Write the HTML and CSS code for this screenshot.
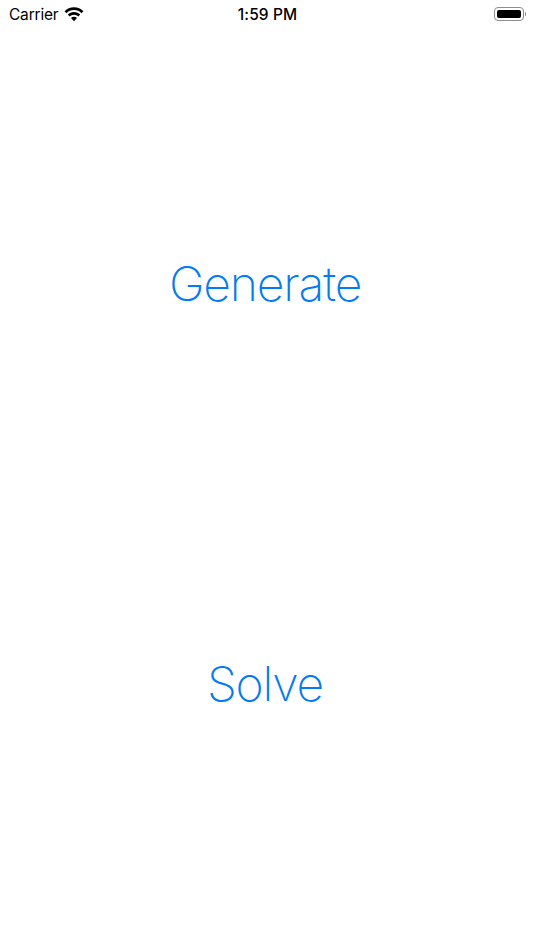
FILE: index.html
```html
<!DOCTYPE html>
<html lang="en">
<head>
    <meta charset="UTF-8">
    <meta name="viewport" content="width=device-width, initial-scale=1.0">
    <title>Sudoku</title>
    <link rel="stylesheet" href="styles.css">
</head>
<body>
    <div class="status-bar">
        <div class="status-left">
            <span class="carrier">Carrier</span>
            <svg class="wifi" width="20" height="15" viewBox="0 0 20 15">
                <path d="M.6 4.300C3 1.800 6.300.3 10 .3s7 1.500 9.400 4l-1.900 2C15.600 4.300 12.900 3.100 10 3.100S4.400 4.300 2.500 6.300z"/>
                <path d="M3.800 7.600C5.400 6 7.600 5 10 5s4.600 1 6.200 2.600l-1.900 2C13.200 8.500 11.700 7.800 10 7.800s-3.200.7-4.300 1.800z"/>
                <path d="M7 10.900c.8-.8 1.900-1.200 3-1.200s2.200.4 3 1.200l-3 3.300z"/>
            </svg>
        </div>
        <div class="time">1:59 PM</div>
        <div class="status-right">
            <div class="battery"><div class="battery-level"></div></div>
            <div class="battery-cap"></div>
        </div>
    </div>
    <div class="content">
        <div class="section"><button class="btn">Generate</button></div>
        <div class="section"><button class="btn">Solve</button></div>
    </div>
</body>
</html>
```

FILE: styles.css
```css
*{
    padding: 0;
    margin: 0;
    box-sizing: border-box;
}
body{
    width: 534px;
    height: 950px;
    overflow: hidden;
    background-color: #fff;
    font-family: "Inter", "Liberation Sans", sans-serif;
}
.status-bar{
    display: grid;
    grid-template-columns: 1fr auto 1fr;
    align-items: center;
    height: 28px;
    padding: 0 8px 0 9px;
    color: #000;
}
.status-left{
    display: flex;
    align-items: center;
    gap: 6px;
}
.carrier{
    font-size: 15.500px;
    letter-spacing: -0.2px;
}
.wifi{
    display: block;
    fill: #000;
}
.time{
    font-size: 15.500px;
    font-weight: 500;
    letter-spacing: 0.1px;
}
.status-right{
    display: flex;
    align-items: center;
    justify-content: flex-end;
    gap: 1px;
}
.battery{
    width: 30px;
    height: 14px;
    border: 1px solid #8e8e8e;
    border-radius: 4px;
    padding: 2px;
}
.battery-level{
    height: 100%;
    background-color: #000;
    border-radius: 2px;
}
.battery-cap{
    width: 1.500px;
    height: 4px;
    background-color: #8e8e8e;
    border-radius: 0 1px 1px 0;
}
.content{
    padding-top: 55px;
}
.section{
    display: flex;
    align-items: center;
    justify-content: center;
    height: 400px;
}
.btn{
    border: none;
    background: none;
    color: #007aff;
    font-family: inherit;
    font-size: 48px;
    font-weight: 200;
    letter-spacing: -1.150px;
    padding-right: 4px;
    cursor: pointer;
}
```
